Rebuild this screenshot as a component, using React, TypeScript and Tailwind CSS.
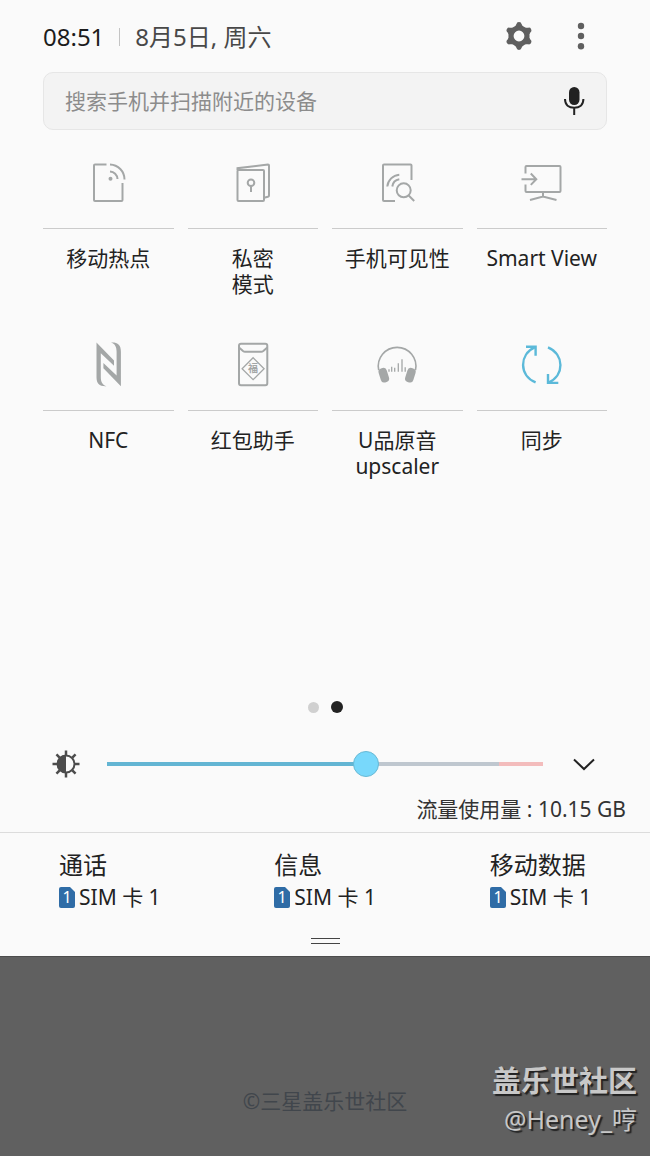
import { useState } from "react";
import type { ReactNode } from "react";

interface ITile {
	label: string[];
	icon: ReactNode;
	active?: boolean;
}

const HotspotIcon = () => (
	<>
		<path d="M22.5 5.5H11q-1 0-1 1V41q0 1 1 1h26.5q1 0 1-1V24" />
		<path d="M26 5.5A15 15 0 0 1 40.5 20.5" />
		<path d="M26 12.5A8 8 0 0 1 33.5 20" />
		<circle cx="26.5" cy="19.8" r="2" fill="currentColor" stroke="none" />
	</>
);

const PrivateIcon = () => (
	<>
		<rect x="8.5" y="11" width="26.5" height="31" rx="1" />
		<path d="M8.5 11V9.2L39 5.6q1 0 1 1V36.5q0 1-1 1.2l-4 1" />
		<circle cx="22" cy="23.8" r="3.3" />
		<path d="M22 27v6" />
	</>
);

const VisibilityIcon = () => (
	<>
		<path d="M22 42H11q-1 0-1-1V6.5q0-1 1-1h26.5q1 0 1 1V21" />
		<path d="M14.3 27.5A13 13 0 0 1 26.3 15.7" />
		<path d="M19.3 27.5A8.5 8.5 0 0 1 26.3 20.3" />
		<circle cx="30.7" cy="31.3" r="7" />
		<path d="M35.7 36.5l5.5 5.5" />
	</>
);

const SmartViewIcon = () => (
	<>
		<path d="M7.5 14.5V8q0-1 1-1H41.5q1 0 1 1V32q0 1-1 1H8.5q-1 0-1-1V25.5" />
		<path d="M3.5 20.2H18M12.8 14.5l5.5 5.7-5.5 5.7" />
		<path d="M25 33v4.5M12 41l13-3.5 13.5 3.5" />
	</>
);

const nfcHalf =
	"M12.5 1.5L30 19.5V24.7L16.8 12.3V36C16.8 41 18.5 44 22.5 45.2C15.5 45.5 12.5 43 12.5 36Z";

const NfcIcon = () => (
	<g fill="currentColor" stroke="none">
		<path d={nfcHalf} />
		<path d={nfcHalf} transform="rotate(180 24.7 23.4)" />
	</g>
);

const EnvelopeIcon = () => (
	<>
		<rect x="10" y="2.7" width="28.3" height="41.6" rx="2" />
		<path d="M10 6.5l4 3.5q1 .8 2 .8h16.3q1 0 2-.8l4-3.5" />
		<path d="M24.1 16.7l11 11-11 11-11-11z" strokeWidth="1.3" />
		<text
			x="24.1"
			y="31.3"
			textAnchor="middle"
			fill="currentColor"
			stroke="none"
			className="text-[10px] font-bold">
			福
		</text>
	</>
);

const HeadphoneIcon = () => (
	<>
		<path d="M5.700 29a18.800 18.800 0 1 1 36.800 0" strokeWidth="1.600" />
		<g fill="currentColor" stroke="none">
			<rect x="6.500" y="27" width="8.500" height="14.500" rx="3.500" transform="rotate(-17 10.700 34)" />
			<rect x="33.200" y="27" width="8.500" height="14.500" rx="3.500" transform="rotate(17 37.500 34)" />
		</g>
		<path
			d="M16 30.700v-2.400M18.700 30.700v-5M21.700 30.700v-4M25.300 30.700v-8.500M29 30.700v-12.500M32.200 30.700v-4.500"
			strokeWidth="1.300"
		/>
	</>
);

const SyncIcon = () => (
	<g strokeWidth="2.400">
		<path d="M17.600 41.400C1 34.500 1 13.500 17 6.200" />
		<path d="M8 5.700h9.600v9" />
		<path d="M30 6.400C46.500 13.500 46.500 34.500 30.500 41.500" />
		<path d="M40.300 41.900H30V33" />
	</g>
);

const tiles: ITile[] = [
	{ label: ["移动热点"], icon: <HotspotIcon /> },
	{ label: ["私密", "模式"], icon: <PrivateIcon /> },
	{ label: ["手机可见性"], icon: <VisibilityIcon /> },
	{ label: ["Smart View"], icon: <SmartViewIcon /> },
	{ label: ["NFC"], icon: <NfcIcon /> },
	{ label: ["红包助手"], icon: <EnvelopeIcon /> },
	{ label: ["U品原音", "upscaler"], icon: <HeadphoneIcon /> },
	{ label: ["同步"], icon: <SyncIcon />, active: true },
];

const sims = ["通话", "信息", "移动数据"];

const Header = () => (
	<header className="flex h-[72px] items-center pl-[43px] pr-[54px] pt-[2px] text-2xl">
		<span className="text-[#1c1c1c]">08:51</span>
		<span className="mx-[15px] h-[18px] w-px bg-[#c4c4c4]" />
		<span className="text-[#484848]">8月5日, 周六</span>
		<button aria-label="设置" className="ml-auto text-[#5f5f5f]">
			<svg width="30" height="30" viewBox="-15 -14 30 30" fill="none" stroke="currentColor">
				<circle r="8" strokeWidth="5.200" />
				{[0, 60, 120, 180, 240, 300].map((deg) => (
					<path
						key={deg}
						d="M-2-11.500Q-1.800-13.300 0-13.300T2-11.500L3.500-9H-3.500Z"
						fill="currentColor"
						strokeWidth="1.300"
						strokeLinejoin="round"
						transform={`rotate(${deg})`}
					/>
				))}
			</svg>
		</button>
		<button aria-label="更多" className="ml-8 text-[#5f5f5f]">
			<svg width="30" height="30" viewBox="0 0 30 30" fill="currentColor">
				<circle cx="15" cy="4" r="3.200" />
				<circle cx="15" cy="14" r="3.200" />
				<circle cx="15" cy="24.200" r="3.200" />
			</svg>
		</button>
	</header>
);

const SearchBar = () => (
	<div className="mx-[43px] flex h-[58px] items-center rounded-[10px] border border-[#e6e6e6] bg-[#f3f3f3] pl-[21px] pr-[17px]">
		<input
			type="text"
			aria-label="搜索"
			placeholder="搜索手机并扫描附近的设备"
			className="min-w-0 flex-1 bg-transparent text-[21px] leading-8 text-[#222] placeholder:text-[#8c8c8c] focus:outline-none"
		/>
		<button aria-label="语音搜索" className="text-[#222]">
			<svg width="30" height="30" viewBox="0 0 30 30" fill="none" stroke="currentColor" strokeWidth="2">
				<rect x="10" y="1" width="10.500" height="18" rx="5.200" fill="currentColor" stroke="none" />
				<path d="M6 13C6 19 10 21.800 15.200 21.800S24.400 19 24.400 13M15.200 21.800V29" />
			</svg>
		</button>
	</div>
);

const Tile = ({ label, icon, active }: ITile) => (
	<button aria-pressed={!!active} className="flex flex-col items-center">
		<span
			className={
				"flex h-[91px] w-full items-center justify-center border-b border-[#cbcbcb] " +
				(active ? "text-[#5bb9d9]" : "text-[#a4a7a7]")
			}>
			<svg width="48" height="48" viewBox="0 0 48 48" fill="none" stroke="currentColor" strokeWidth="2">
				{icon}
			</svg>
		</span>
		<span className="mt-4 text-[21px] leading-[26px] text-[#222]">
			{label.map((line) => (
				<span key={line} className="block">
					{line}
				</span>
			))}
		</span>
	</button>
);

const Brightness = () => {
	const [level, setLevel] = useState(60);

	// the last tenth of the track is the warning zone
	const track = `linear-gradient(to right, #63b5d3 ${level}%, #bfc7cf ${level}%, #bfc7cf 90%, #f3bcbc 90%)`;

	return (
		<div className="mt-[37px] flex h-7 items-center pl-[52px] pr-[54px]">
			<svg width="28" height="28" viewBox="-14 -14 28 28" fill="none" stroke="#4c4c4c" strokeWidth="2">
				<circle r="8.500" />
				<path d="M0-9A9 9 0 0 0 0 9Z" fill="#4c4c4c" stroke="none" />
				{[0, 45, 90, 135, 180, 225, 270, 315].map((deg) => (
					<path key={deg} d="M0-9V-13.500" strokeWidth="2.500" transform={`rotate(${deg})`} />
				))}
			</svg>
			<input
				type="range"
				aria-label="亮度"
				min={0}
				max={100}
				value={level}
				onChange={(event) => setLevel(Number(event.target.value))}
				style={{ background: track }}
				className="ml-[27px] mr-[29px] h-1 min-w-0 flex-1 appearance-none [&::-webkit-slider-thumb]:h-[26px] [&::-webkit-slider-thumb]:w-[26px] [&::-webkit-slider-thumb]:appearance-none [&::-webkit-slider-thumb]:rounded-full [&::-webkit-slider-thumb]:border [&::-webkit-slider-thumb]:border-[#67b9d5] [&::-webkit-slider-thumb]:bg-[#78d8fb]"
			/>
			<button aria-label="展开" className="text-[#222]">
				<svg width="24" height="24" viewBox="0 0 24 24" fill="none" stroke="currentColor" strokeWidth="2">
					<path d="M2 7.500l10 9.500 10-9.500" />
				</svg>
			</button>
		</div>
	);
};

const SimCard = ({ title }: { title: string }) => (
	<button className="pl-[59px] text-left text-[#222]">
		<span className="block text-2xl leading-8">{title}</span>
		<span className="flex items-center gap-1 text-[21px] leading-8">
			<svg width="16" height="21" viewBox="0 0 16 21">
				<path d="M2 0H11L16 5V19q0 2-2 2H2q-2 0-2-2V2q0-2 2-2Z" fill="#2f6ca6" />
				<text x="8" y="16" textAnchor="middle" fill="#fff" className="text-[16px]">
					1
				</text>
			</svg>
			SIM 卡 1
		</span>
	</button>
);

export default function App() {
	return (
		<div
			lang="zh-CN"
			className="flex min-h-screen flex-col bg-[#606060] font-['Noto_Sans','Noto_Sans_CJK_SC',sans-serif]">
			<main className="border-b border-[#4c4c4c] bg-[#fafafa]">
				<Header />
				<SearchBar />
				<div className="mt-2 min-h-[563px] px-[43px]">
					<div className="grid grid-cols-4 gap-x-[14px] gap-y-[23px]">
						{tiles.map((tile) => (
							<Tile key={tile.label[0]} {...tile} />
						))}
					</div>
				</div>

				{/* page dots */}
				<div className="flex h-3 items-center justify-center gap-3">
					<span className="h-[11px] w-[11px] rounded-full bg-[#d0d0d0]" />
					<span className="h-3 w-3 rounded-full bg-[#222]" />
				</div>

				<Brightness />

				<p className="mt-[18px] border-b border-[#dcdcdc] pb-[10px] pr-6 text-right text-[21px] leading-[26px] text-[#333]">
					流量使用量 : 10.15 GB
				</p>

				<div className="grid grid-cols-3 pr-1 pt-4">
					{sims.map((title) => (
						<SimCard key={title} title={title} />
					))}
				</div>

				{/* drag handle */}
				<div className="mx-auto mb-3 mt-[25px] h-[6px] w-[29px] border-y border-[#444]" />
			</main>

			<footer className="relative flex-1">
				<p className="pb-10 pt-[130px] text-center text-[21px] leading-7 text-[#41464c]">
					©三星盖乐世社区
				</p>
				<div className="absolute bottom-[19px] right-[13px] text-right text-[#c8c8c8] [text-shadow:2px_2px_1px_#222]">
					<p className="text-[29px] font-bold leading-10">盖乐世社区</p>
					<p className="text-[25px] leading-9">@Heney_哼</p>
				</div>
			</footer>
		</div>
	);
}
